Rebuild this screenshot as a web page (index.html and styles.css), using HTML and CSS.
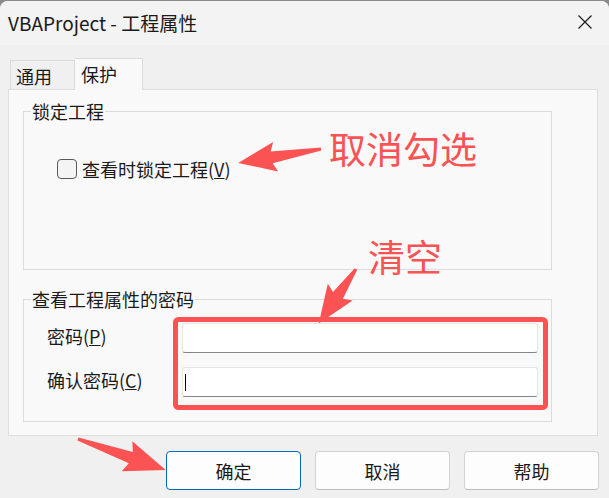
FILE: index.html
```html
<!DOCTYPE html>
<html lang="zh-CN">
<head>
<meta charset="utf-8">
<title>VBAProject - 工程属性</title>
<link rel="stylesheet" href="styles.css">
</head>
<body>
<div class="window">
  <div class="titlebar">
    <span class="title">VBAProject - 工程属性</span>
    <svg class="close" width="14" height="14" viewBox="0 0 14 14"><path d="M0.5 0.5 L13.5 13.5 M13.5 0.5 L0.5 13.5" stroke="#1b1b1b" stroke-width="1.2" fill="none"/></svg>
  </div>
  <div class="main">
    <div class="tabs">
      <div class="tab">通用</div>
      <div class="tab active">保护</div>
    </div>
    <div class="panel">
      <fieldset class="group group-lock">
        <legend>锁定工程</legend>
        <div class="lock-body">
          <label class="check-row"><span class="checkbox"></span><span>查看时锁定工程(<u>V</u>)</span></label>
        </div>
      </fieldset>
      <fieldset class="group group-pass">
        <legend>查看工程属性的密码</legend>
        <div class="form-grid">
          <span class="lbl">密码(<u>P</u>)</span>
          <div class="input"></div>
          <span class="lbl">确认密码(<u>C</u>)</span>
          <div class="input"><span class="caret"></span></div>
        </div>
      </fieldset>
    </div>
    <div class="buttons">
      <div class="btn primary">确定</div>
      <div class="btn">取消</div>
      <div class="btn">帮助</div>
    </div>
  </div>
  <svg class="overlay" width="609" height="498" viewBox="0 0 609 498">
    <g fill="#fb5253">
      <g transform="translate(321 149) rotate(170.4)">
        <polygon points="0,-1.5 50,-6 46,-15 84,0 46,15 50,6 0,1.5"/>
      </g>
      <g transform="translate(356 269) rotate(124.4)">
        <polygon points="0,-1.5 32,-6 28,-15 66,0 28,15 32,6 0,1.5"/>
      </g>
      <g transform="translate(78 439) rotate(19.4)">
        <polygon points="0,-1.5 56,-6 52,-16 93,0 52,16 56,6 0,1.5"/>
      </g>
    </g>
    <rect x="175.5" y="319.5" width="370" height="88" rx="3" fill="none" stroke="#fb5253" stroke-width="5"/>
    <text class="note" x="329" y="164">取消勾选</text>
    <text class="note" x="368" y="272">清空</text>
  </svg>
</div>
</body>
</html>
```
FILE: styles.css
```css
* { box-sizing: border-box; }
html, body {
  margin: 0;
  padding: 0;
}
body {
  width: 609px;
  height: 498px;
  overflow: hidden;
  background: #8a8a8a;
  font-family: "Noto Sans CJK SC", "Noto Sans", sans-serif;
  color: #1a1a1a;
}
.window {
  position: relative;
  margin-top: 1px;
  height: 497px;
  background: #f0f0f0;
  border-radius: 8px 8px 0 0;
  overflow: hidden;
}
.titlebar {
  height: 44px;
  background: #f3f3f3;
  display: flex;
  align-items: center;
  justify-content: space-between;
  padding: 0 17px 0 8px;
}
.title {
  font-size: 19px;
  line-height: 1;
  color: #1a1a1a;
  margin-top: -2px;
}
.close { display: block; margin-top: -2px; }
.main {
  padding: 12px 11px 0 8px;
}
.tabs {
  display: flex;
  align-items: flex-end;
  padding-left: 2px;
  height: 32px;
}
.tab {
  font-size: 18px;
  line-height: 1;
  height: 29px;
  width: 65px;
  padding: 6px 0 0 5px;
  background: #f0f0f0;
  border: 1px solid #dadada;
  border-bottom: none;
}
.tab.active {
  width: 68px;
  height: 32px;
  padding: 6px 0 0 6px;
  background: #f9f9f9;
  margin-bottom: -1px;
  position: relative;
  z-index: 1;
  border-left: none;
}
.panel {
  width: 590px;
  height: 347px;
  background: #f9f9f9;
  border: 1px solid #dedede;
  padding: 10px 45px 0 14px;
}
.group {
  margin: 0;
  padding: 0;
  border: 1px solid #dcdcdc;
  min-inline-size: 0;
}
.group legend {
  font-size: 18px;
  line-height: 23px;
  padding: 0 1px;
  margin-left: 7px;
  color: #1a1a1a;
}
.group-lock {
  height: 170px;
}
.lock-body {
  padding: 36px 0 0 33px;
}
.check-row {
  display: flex;
  align-items: center;
  gap: 5px;
  font-size: 18px;
  line-height: 20px;
}
.checkbox {
  width: 20px;
  height: 20px;
  border: 1px solid #5a5a5a;
  border-radius: 4px;
  background: #f4f4f4;
}
.group-pass {
  margin-top: 18px;
  height: 134px;
}
.form-grid {
  display: grid;
  grid-template-columns: 135px 1fr;
  row-gap: 14px;
  align-items: center;
  padding: 12px 13px 0 23px;
}
.lbl {
  font-size: 18px;
  line-height: 20px;
  margin-top: -5px;
}
.input {
  height: 30px;
  background: #ffffff;
  border: 1px solid #e6e6e6;
  border-bottom: 1px solid #858585;
  border-radius: 3px;
  display: flex;
  align-items: center;
  padding-left: 2px;
}
.caret {
  width: 1px;
  height: 17px;
  background: #000;
}
.buttons {
  display: flex;
  justify-content: flex-end;
  gap: 14px;
  margin-top: 15px;
  margin-right: -1px;
}
.btn {
  width: 135px;
  height: 39px;
  display: flex;
  align-items: center;
  justify-content: center;
  font-size: 18px;
  background: #fdfdfd;
  border: 1px solid #d3d3d3;
  border-bottom-color: #bdbdbd;
  border-radius: 4px;
  color: #1a1a1a;
}
.btn.primary {
  border: 1px solid #0067c0;
}
.overlay {
  position: absolute;
  top: -1px;
  left: 0;
  pointer-events: none;
}
.note {
  font-family: "Noto Sans CJK SC", sans-serif;
  font-size: 37px;
  fill: #fb5253;
}
```
